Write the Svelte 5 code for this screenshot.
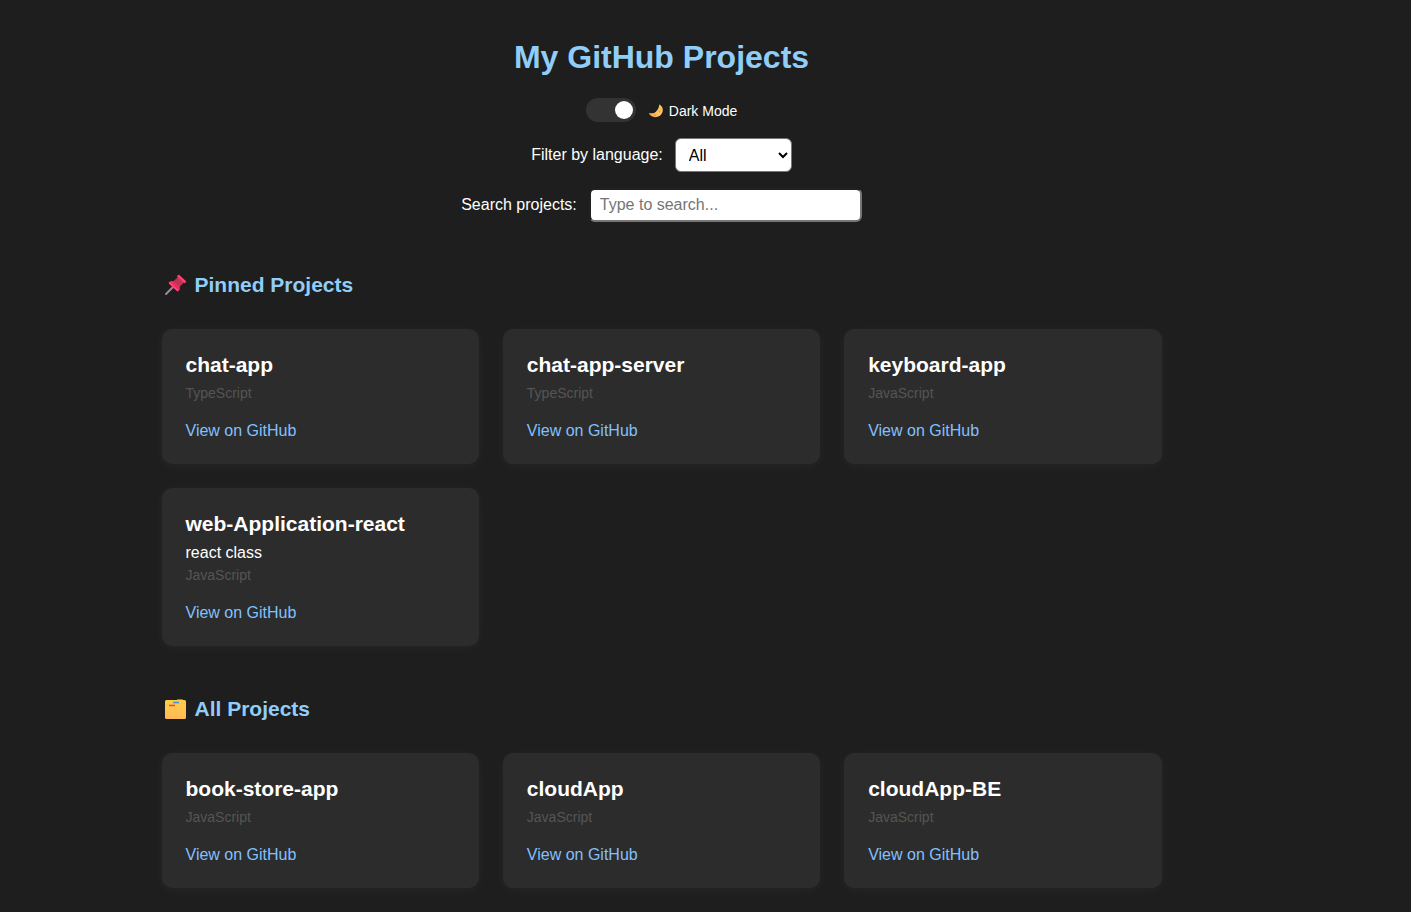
<script>
  const pinned = [
    { name: 'chat-app', language: 'TypeScript' },
    { name: 'chat-app-server', language: 'TypeScript' },
    { name: 'keyboard-app', language: 'JavaScript' },
    { name: 'web-Application-react', description: 'react class', language: 'JavaScript' }
  ];
  const projects = [
    { name: 'book-store-app', language: 'JavaScript' },
    { name: 'cloudApp', language: 'JavaScript' },
    { name: 'cloudApp-BE', language: 'JavaScript' }
  ];

  let dark = $state(true);
  let language = $state('All');
  let query = $state('');

  const matches = (p) =>
    (language === 'All' || p.language === language) &&
    p.name.toLowerCase().includes(query.toLowerCase());

  let shownPinned = $derived(pinned.filter(matches));
  let shownProjects = $derived(projects.filter(matches));
</script>

{#snippet cards(list)}
  <div class="grid">
    {#each list as project (project.name)}
      <article class="card">
        <h3>{project.name}</h3>
        {#if project.description}
          <p class="description">{project.description}</p>
        {/if}
        <p class="language">{project.language}</p>
        <a href="#{project.name}">View on GitHub</a>
      </article>
    {/each}
  </div>
{/snippet}

<div class="page">
  <main>
    <header>
      <h1>My GitHub Projects</h1>

      <label class="mode">
        <input class="switch" type="checkbox" bind:checked={dark} />
        <span class="mode-label">
          <svg width="16" height="16" viewBox="0 0 16 16" aria-hidden="true">
            <defs>
              <linearGradient id="moon" x1="0" y1="1" x2="1" y2="0">
                <stop offset="0" stop-color="#f2a04f" />
                <stop offset="0.5" stop-color="#ffc963" />
                <stop offset="1" stop-color="#f0b95c" />
              </linearGradient>
            </defs>
            <path d="M11.200 1.400c3.200 1.400 4.400 4.900 3.100 8.100-1.500 3.700-5.400 5.400-9.200 4.300C3.100 13.200 1.400 11.800.8 10c3.700.8 6.500-.2 8.200-2.600 1.500-1.900 2.200-3.900 2.200-6z" fill="url(#moon)" />
            <circle cx="7" cy="12" r="0.800" fill="#dd8b45" />
            <circle cx="11.500" cy="8.500" r="0.900" fill="#e39a4b" />
          </svg>
          Dark Mode
        </span>
      </label>

      <div class="field">
        <label for="language">Filter by language:</label>
        <select id="language" bind:value={language}>
          <option>All</option>
          <option>JavaScript</option>
          <option>TypeScript</option>
        </select>
      </div>

      <div class="field">
        <label for="search">Search projects:</label>
        <input id="search" class="search" type="text" placeholder="Type to search..." bind:value={query} />
      </div>
    </header>

    <section>
      <h2>
        <svg width="28" height="24" viewBox="0 0 28 24" aria-hidden="true">
          <path d="M4 21 11 14" stroke="#9a8b9c" stroke-width="2" stroke-linecap="round" />
          <path d="M15.500 2.400c.7-.8 1.600-.7 2.300 0l5.600 5.200c.7.7.7 1.600-.1 2.200-.7.500-1.400.4-2.100.2l-3.500 3.600c.5 1.700.2 3.300-.9 4.400-.7.700-1.400.6-2.100 0L7.200 11c-.7-.7-.6-1.400 0-2 1.200-1.100 2.800-1.300 4.400-.8l3.900-3.500c-.4-.8-.5-1.600 0-2.300z" fill="#e5305f" />
          <path d="m11.700 8.300 3.900-3.500 5.500 5.200-3.500 3.700z" fill="#bd3352" />
          <path d="M16.500 2.800 23 8.900M7.700 9.900l7.800 7.300" stroke="#ff477d" stroke-width="1.500" stroke-linecap="round" />
        </svg>
        Pinned Projects
      </h2>
      {@render cards(shownPinned)}
    </section>

    <section>
      <h2>
        <svg width="28" height="24" viewBox="0 0 28 24" aria-hidden="true">
          <defs>
            <linearGradient id="folder" x1="0" y1="0" x2="0" y2="1">
              <stop offset="0" stop-color="#ffcf48" />
              <stop offset="1" stop-color="#ffb957" />
            </linearGradient>
          </defs>
          <rect x="15" y="2" width="6" height="3" rx="1" fill="#4e9a58" />
          <rect x="3" y="3" width="21" height="19" rx="1.500" fill="url(#folder)" />
          <path d="M3.500 7.300h9.500l1.500-1h9.500" fill="none" stroke="#f5b83c" stroke-width="0.600" />
          <path d="M11 5.500h6" stroke="#3d8fe0" stroke-width="1.500" />
          <path d="M7 8.500h6" stroke="#f0455a" stroke-width="1.500" />
        </svg>
        All Projects
      </h2>
      {@render cards(shownProjects)}
    </section>
  </main>
</div>

<style>
  :global(body) {
    margin: 0;
    background: #1e1e1e;
  }

  .page {
    padding: 39px 88px 24px 0;
    color: #fff;
    font: 16px/18px "Liberation Sans", Arial, sans-serif;
  }

  main {
    max-width: 1000px;
    margin: 0 auto;
  }

  header {
    display: flex;
    flex-direction: column;
    align-items: center;
    gap: 16px;
  }

  h1, h2, h3, p {
    margin: 0;
  }

  h1 {
    margin-bottom: 7px;
    color: #90cdf9;
    font-size: 32px;
    line-height: 36px;
  }

  .mode {
    display: flex;
    align-items: center;
    gap: 12px;
    font-size: 14px;
  }

  .mode-label {
    display: flex;
    align-items: center;
    gap: 5px;
    padding-top: 2px;
  }

  .switch {
    appearance: none;
    display: flex;
    align-items: center;
    box-sizing: border-box;
    width: 50px;
    height: 24px;
    margin: 0;
    padding: 0 3px;
    border-radius: 12px;
    background: #ccc;
  }

  .switch::before {
    content: "";
    width: 18px;
    height: 18px;
    border-radius: 50%;
    background: #fff;
  }

  .switch:checked {
    justify-content: flex-end;
    background: #333;
  }

  .field {
    display: flex;
    align-items: center;
    gap: 12px;
  }

  select,
  .search {
    box-sizing: border-box;
    height: 34px;
    margin: 0;
    border-radius: 6px;
    background: #fff;
    color: #000;
    font: inherit;
  }

  select {
    width: 117px;
    padding: 0 9px;
    border: 1px solid #767676;
  }

  .search {
    width: 273px;
    padding: 0 9px;
    border: 2px inset #767676;
  }

  .search::placeholder {
    color: #757575;
  }

  section {
    margin-top: 51px;
  }

  h2 {
    display: flex;
    align-items: center;
    gap: 5px;
    margin-bottom: 32px;
    color: #90cdf9;
    font-size: 21px;
    line-height: 24px;
  }

  .grid {
    display: grid;
    grid-template-columns: repeat(auto-fill, minmax(280px, 1fr));
    gap: 24px;
  }

  .card {
    display: flex;
    flex-direction: column;
    align-items: flex-start;
    padding: 24px;
    border-radius: 10px;
    background: #2c2c2c;
    box-shadow: 0 2px 12px rgba(255, 255, 255, 0.04);
  }

  h3 {
    margin-bottom: 8px;
    font-size: 21px;
    line-height: 24px;
  }

  .description {
    margin-bottom: 5px;
  }

  .language {
    margin-bottom: 21px;
    color: #555;
    font-size: 14px;
    line-height: 16px;
  }

  .card a {
    color: #82c0ff;
    text-decoration: none;
  }
</style>
